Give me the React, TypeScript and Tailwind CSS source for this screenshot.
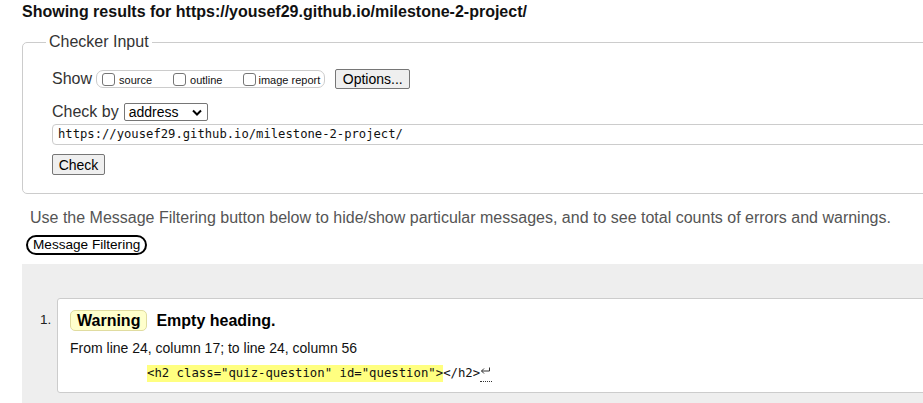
import React from "react";

function Check({ label, gap }: { label: string; gap: string }) {
  return (
    <label className="flex items-center mr-[21px] last:mr-0">
      <span className={"w-[13px] h-[13px] border border-[#767676] rounded-[3px] bg-white " + gap} />
      <span className="text-[11px] text-[#111] mt-[2px]">{label}</span>
    </label>
  );
}

export default function App() {
  return (
    <div className="w-full h-[403px] overflow-hidden bg-white font-['Liberation_Sans',Arial,sans-serif] text-black">
      <div className="w-[1000px] pl-[22px]">
        <h2 className="pt-[3px] text-[16px] leading-[18px] font-bold text-[#111]">
          Showing results for https://yousef29.github.io/milestone-2-project/
        </h2>

        <fieldset className="mt-[12px] border border-[#ccc] rounded-[5px] pl-[29px] pb-[16px]">
          <legend className="-ml-[6px] px-[3px] text-[16px] leading-[18px] text-[#333]">Checker Input</legend>

          <div className="flex items-center mt-[18px] h-[20px]">
            <span className="text-[16px] text-[#333] mr-[4px]">Show</span>
            <div className="flex items-center h-[18px] border border-[#ccc] rounded-[7px] pl-[5px] pr-[4px]">
              <Check label="source" gap="mr-[4px]" />
              <Check label="outline" gap="mr-[4px]" />
              <Check label="image report" gap="mr-[2px]" />
            </div>
            <button className="ml-[10px] h-[20px] w-[75px] border border-[#767676] rounded-[2px] bg-[#efefef] text-[14px] text-black leading-none">
              Options...
            </button>
          </div>

          <div className="flex items-center mt-[14px] h-[18px]">
            <span className="text-[16px] text-[#333] mr-[5px]">Check by</span>
            <div className="flex items-center justify-between w-[84px] h-[18px] border border-[#767676] rounded-[2px] pl-[4px] pr-[5px] text-[14px] text-black">
              <span>address</span>
              <svg width="10" height="7" viewBox="0 0 10 7">
                <path d="M1 1.5 L5 5.5 L9 1.5" fill="none" stroke="#000" strokeWidth="2" />
              </svg>
            </div>
          </div>

          <div className="mt-[3px] h-[21px] border border-[#ccc] rounded-[4px] flex items-center pl-[5px] font-['DejaVu_Sans_Mono','Liberation_Mono',monospace] text-[12.2px] text-[#111]">
            https://yousef29.github.io/milestone-2-project/
          </div>

          <button className="mt-[9px] h-[21px] w-[53px] border border-[#767676] rounded-[2px] bg-[#efefef] text-[14px] text-black leading-none">
            Check
          </button>
        </fieldset>

        <p className="mt-[15px] ml-[8px] text-[16px] leading-[18px] text-[#555]">
          Use the Message Filtering button below to hide/show particular messages, and to see total counts of errors and warnings.
        </p>

        <button className="mt-[8px] ml-[4px] h-[20px] px-[5px] border-2 border-black rounded-full bg-white text-[13.6px] leading-none text-black">
          Message Filtering
        </button>

        <div className="mt-[8px] bg-[#eee] pt-[34px] pb-[20px]">
          <div className="flex">
            <span className="w-[35px] pl-[18px] pt-[12px] text-[13.5px] text-[#222]">1.</span>
            <div className="flex-1 bg-white border border-[#ccc] rounded-[3px] pl-[12px] pt-[10px] h-[95px]">
              <div className="flex items-center">
                <span className="px-[6px] h-[21px] flex items-center border border-[#e0dca0] rounded-[5px] bg-[#ffffcc] text-[16px] font-bold text-black">
                  Warning
                </span>
                <span className="ml-[9px] text-[16px] font-bold text-black">Empty heading.</span>
              </div>
              <p className="mt-[7px] text-[14px] leading-[16px] text-[#111]">
                From line 24, column 17; to line 24, column 56
              </p>
              <div className="mt-[9px] pl-[77px] flex items-center font-['DejaVu_Sans_Mono','Liberation_Mono',monospace] text-[12.3px] leading-[17px]">
                <span className="bg-[#ffff80] text-[#111]">&lt;h2 class="quiz-question" id="question"&gt;</span>
                <span className="text-[#111]">&lt;/h2&gt;</span>
                <span className="flex items-start h-[17px] w-[12px] border-b border-dotted border-[#333]">
                  <svg width="11" height="8" viewBox="0 0 11 8" className="mt-[2px]">
                    <path d="M9.5 0.5 V4 H1.5 M4 1.5 L1.5 4 L4 6.5" fill="none" stroke="#333" strokeWidth="1" />
                  </svg>
                </span>
              </div>
            </div>
          </div>
        </div>
      </div>
    </div>
  );
}
